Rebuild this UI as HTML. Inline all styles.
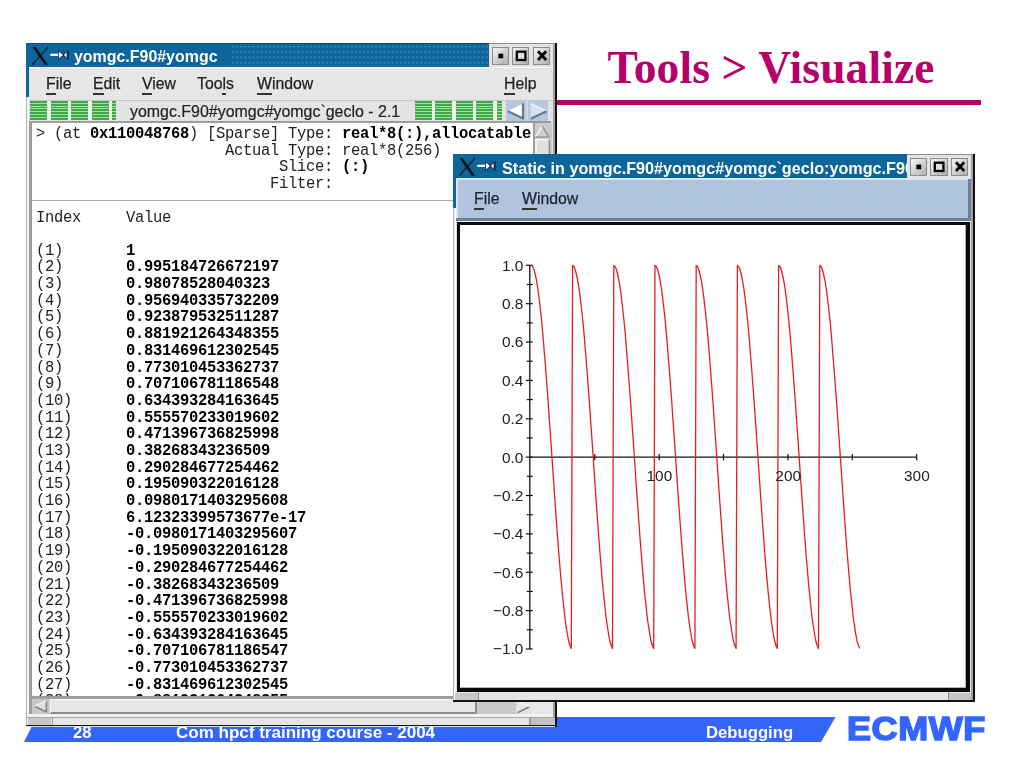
<!DOCTYPE html>
<html><head><meta charset="utf-8"><title>Tools &gt; Visualize</title>
<style>
html,body{margin:0;padding:0;}
body{width:1024px;height:768px;overflow:hidden;background:#fff;position:relative;font-family:"Liberation Sans",sans-serif;}
.abs,.m,.grn,div{position:absolute;}
.m{font-family:"Liberation Mono",monospace;font-size:15.5px;line-height:16.69px;height:16.69px;white-space:pre;color:#222;letter-spacing:-0.3px;transform:scaleY(1.07);transform-origin:0 50%;will-change:transform;}
.m.b{font-weight:bold;color:#000;}
.s{font-family:"Liberation Sans",sans-serif;white-space:pre;will-change:transform;}
.grn{top:100.5px;height:19.5px;background:repeating-linear-gradient(to bottom,#43a64c 0,#43a64c 1.8px,#98e69a 1.8px,#98e69a 2.8px);}
u{text-decoration:none;border-bottom:2px solid #333;padding-bottom:0.5px;}
.btn{box-sizing:border-box;border:1.2px solid #8c8c8c;background:linear-gradient(135deg,#f0f0f0 10%,#d2d2d2 50%,#aeaeae 100%);}
</style></head><body>

<!-- slide title -->
<div class="abs" id="title" style="left:607.4px;top:40.1px;letter-spacing:0.17px;font-family:'Liberation Serif',serif;font-weight:bold;font-size:45.4px;line-height:56px;color:#b5006b;white-space:pre;">Tools &gt; Visualize</div>
<div class="abs" style="left:550px;top:99.7px;width:431px;height:5.3px;background:#b7006c;"></div>

<!-- footer -->
<svg class="abs" style="left:0;top:0" width="1024" height="768" viewBox="0 0 1024 768">
<polygon points="36.5,717 835.5,717 821,742 24,742" fill="#3265f8"/>
</svg>
<div class="abs s" id="f28" style="left:73px;top:723px;font-weight:bold;font-size:16.6px;line-height:20px;color:#fff;">28</div>
<div class="abs s" id="fcom" style="left:176px;top:723px;font-weight:bold;font-size:17.03px;line-height:20px;color:#fff;">Com hpcf training course - 2004</div>
<div class="abs s" id="fdbg" style="left:706px;top:723px;font-weight:bold;font-size:16.7px;line-height:20px;color:#fff;">Debugging</div>
<div class="abs s" id="ecmwf" style="left:847px;top:708.5px;font-weight:bold;font-size:32.3px;line-height:40px;color:#3366ff;-webkit-text-stroke:1.5px #3366ff;letter-spacing:0.5px;transform:scaleX(1.115);transform-origin:0 0;">ECMWF</div>

<!-- ================= WINDOW 1 ================= -->
<div id="w1" style="left:26px;top:43px;width:531px;height:683.5px;background:#dedede;"></div>
<!-- title bar -->
<div style="left:26px;top:43px;width:463px;height:24px;background:#0e659a;"></div>
<div style="left:231px;top:44px;width:258px;height:22px;background-image:radial-gradient(circle at 2px 2.6px,#2d84bc 0.7px,transparent 1.5px);background-size:4.1px 5.4px;"></div>
<div style="left:26px;top:43px;width:3px;height:53.5px;background:#0e659a;"></div>
<div style="left:26px;top:96.5px;width:1.2px;height:629px;background:#b4b4b4;"></div>
<div style="left:27.2px;top:96.5px;width:2px;height:629px;background:#f6f6f6;"></div>
<div style="left:26px;top:43px;width:463px;height:1px;background:#0c5380;"></div>
<!-- X icon + pin -->
<svg class="abs" style="left:26px;top:43px" width="60" height="24" viewBox="0 0 60 24">
<path d="M6.5 4 L9.6 4 L22 21.7 L18.9 21.7 Z" fill="#0a0a14"/>
<path d="M22 4 L6.4 21.7" stroke="#0a0a14" stroke-width="1.1" fill="none"/>
<rect x="24.3" y="10.7" width="9" height="2.3" fill="#fff"/>
<path d="M32 6.8 L37.6 11 L42.6 6.8 L42.6 17.2 L37.6 13 L32 17.2 Z" fill="#0b2450"/>
<path d="M32.9 8.5 L37.1 12 L32.9 15.5 Z" fill="#fff"/>
<path d="M40.7 9.3 L37.9 12 L40.7 14.7 Z" fill="#f2f2f2"/>
</svg>
<div class="s" id="t1" style="left:73.5px;top:46.5px;font-weight:bold;font-size:15.95px;line-height:20px;color:#fff;">yomgc.F90#yomgc</div>
<!-- title buttons -->
<div style="left:489px;top:43px;width:64px;height:24px;background:#e4e4e4;"></div>
<div style="left:489px;top:43px;width:66px;height:1.2px;background:#8e8e8e;"></div>
<div class="btn" style="left:492.2px;top:47.2px;width:17px;height:17.4px;"></div>
<div class="btn" style="left:512.3px;top:47.2px;width:17.2px;height:17.4px;"></div>
<div class="btn" style="left:532.8px;top:47.2px;width:17.6px;height:17.4px;"></div>
<svg class="abs" style="left:489px;top:43px" width="66" height="24" viewBox="0 0 66 24">
<rect x="9.4" y="10.6" width="4.8" height="4.7" fill="#000"/>
<rect x="27.8" y="8.7" width="8.6" height="8.3" fill="#e0e0e0" stroke="#000" stroke-width="2.3"/>
<path d="M49 8.2 L57.2 17 M57.2 8.2 L49 17" stroke="#000" stroke-width="2.8" fill="none"/>
</svg>
<!-- right frame -->
<div style="left:552.6px;top:43.5px;width:2.9px;height:682px;background:#a2a2a2;"></div>
<div style="left:555.3px;top:43px;width:1.7px;height:683.5px;background:#111;"></div>
<!-- menu bar -->
<div style="left:29px;top:67px;width:523.6px;height:33px;background:#e6e6e6;"></div>
<div style="left:29px;top:67px;width:523.6px;height:1.3px;background:#fbfbfb;"></div>
<div class="s mn" id="m1" style="-webkit-text-stroke:0.25px #222;left:45.6px;top:75px;font-size:15.8px;line-height:18px;color:#222;"><u>F</u>ile</div>
<div class="s mn" id="m2" style="-webkit-text-stroke:0.25px #222;left:92.8px;top:75px;font-size:15.8px;line-height:18px;color:#222;"><u>E</u>dit</div>
<div class="s mn" id="m3" style="-webkit-text-stroke:0.25px #222;left:141.5px;top:75px;font-size:15.8px;line-height:18px;color:#222;"><u>V</u>iew</div>
<div class="s mn" id="m4" style="-webkit-text-stroke:0.25px #222;left:196.5px;top:75px;font-size:15.8px;line-height:18px;color:#222;">Too<u>l</u>s</div>
<div class="s mn" id="m5" style="-webkit-text-stroke:0.25px #222;left:256.5px;top:75px;font-size:15.8px;line-height:18px;color:#222;"><u>W</u>indow</div>
<div class="s mn" id="m6" style="-webkit-text-stroke:0.25px #222;left:504px;top:75px;font-size:15.8px;line-height:18px;color:#222;"><u>H</u>elp</div>
<!-- tab bar -->
<div style="left:29px;top:100px;width:523.6px;height:21.5px;background:#e4e4e4;"></div>
<div style="left:29px;top:99.5px;width:523.6px;height:1px;background:#c4c4c4;"></div>
<div style="left:30px;top:100.5px;width:86px;height:19.5px;background:#ecf5ec;"></div>
<div style="left:414.5px;top:100.5px;width:87px;height:19.5px;background:#ecf5ec;"></div>
<div class="grn" style="left:30.0px;width:17.0px"></div>
<div class="grn" style="left:50.6px;width:17.0px"></div>
<div class="grn" style="left:71.0px;width:17.0px"></div>
<div class="grn" style="left:91.5px;width:17.0px"></div>
<div class="grn" style="left:112.0px;width:4.0px"></div>
<div class="grn" style="left:414.5px;width:17.0px"></div>
<div class="grn" style="left:435.0px;width:17.0px"></div>
<div class="grn" style="left:455.5px;width:17.0px"></div>
<div class="grn" style="left:476.0px;width:17.0px"></div>
<div class="grn" style="left:497.0px;width:4.5px"></div>
<div class="s" id="tab" style="-webkit-text-stroke:0.2px #222;left:129.5px;top:101.5px;font-size:15.95px;line-height:19px;color:#222;">yomgc.F90#yomgc#yomgc`geclo - 2.1</div>
<div style="left:505.5px;top:100.5px;width:42.5px;height:20.5px;background:#b4c8e2;"></div>
<svg class="abs" style="left:505px;top:100px" width="44" height="22" viewBox="0 0 44 22">
<rect x="20.6" y="0.5" width="2.4" height="20.5" fill="#c9d8ec"/>
<path d="M3 11 L18.5 3.6 L18.5 18.4 Z" fill="#fff"/>
<path d="M3 11.2 L18 18.6" stroke="#6a788e" stroke-width="2.2" fill="none"/>
<path d="M18 3.4 V19.4" stroke="#6a788e" stroke-width="2.2" fill="none"/>
<path d="M25.6 3.6 L41.5 11 L25.6 18.4 Z" fill="#d6e2f2"/>
<path d="M25.6 3.6 L41.5 11" stroke="#eef3fa" stroke-width="1.4" fill="none"/>
<path d="M41.5 11.2 L26 18.8" stroke="#6a788e" stroke-width="2.2" fill="none"/>
</svg>
<!-- content area -->
<div style="left:29.2px;top:121.2px;width:521.8px;height:576px;background:#9c9c9c;"></div>
<div style="left:32px;top:123px;width:501px;height:573.3px;background:#fff;"></div>
<div style="left:32px;top:199.8px;width:501px;height:1.2px;background:#a8a8a8;"></div>
<!-- v scrollbar -->
<div style="left:533px;top:123px;width:18.5px;height:573.3px;background:#cbcbcb;"></div>
<div style="left:533px;top:123px;width:1.6px;height:573.3px;background:#a0a0a0;"></div>
<svg class="abs" style="left:533px;top:123px" width="19" height="32" viewBox="0 0 19 32">
<path d="M9.2 3 L16 14 L2.4 14 Z" fill="#d0d0d0"/>
<path d="M9.2 3 L2.4 14" stroke="#fafafa" stroke-width="1.4"/>
<path d="M9.2 3 L16 14 L2.4 14" stroke="#9a9a9a" stroke-width="1.5" fill="none"/>
<rect x="3" y="16.6" width="13.5" height="16" fill="#e0e0e0"/>
<path d="M3 32 V16.6 H16" stroke="#fafafa" stroke-width="1.3" fill="none"/>
<path d="M16.4 16.6 V32" stroke="#8c8c8c" stroke-width="1.5" fill="none"/>
</svg>
<div id="clip" style="left:0;top:0;width:533px;height:695.6px;overflow:hidden;">
<div class="m" style="left:36.20px;top:125.90px">&gt; (at</div>
<div class="m b" style="left:90.20px;top:125.90px">0x110048768</div>
<div class="m" style="left:189.20px;top:125.90px">) [Sparse] Type:</div>
<div class="m b" style="left:342.20px;top:125.90px">real*8(:),allocatable</div>
<div class="m" style="left:225.20px;top:142.59px">Actual Type: real*8(256)</div>
<div class="m" style="left:279.20px;top:159.28px">Slice:</div>
<div class="m b" style="left:342.20px;top:159.28px">(:)</div>
<div class="m" style="left:270.20px;top:175.97px">Filter:</div>
<div class="m" style="left:36.20px;top:209.50px">Index</div>
<div class="m" style="left:126.20px;top:209.50px">Value</div>
<div class="m" style="left:36.20px;top:242.70px">(1)</div>
<div class="m b" style="left:126.20px;top:242.70px">1</div>
<div class="m" style="left:36.20px;top:259.39px">(2)</div>
<div class="m b" style="left:126.20px;top:259.39px">0.995184726672197</div>
<div class="m" style="left:36.20px;top:276.08px">(3)</div>
<div class="m b" style="left:126.20px;top:276.08px">0.98078528040323</div>
<div class="m" style="left:36.20px;top:292.77px">(4)</div>
<div class="m b" style="left:126.20px;top:292.77px">0.956940335732209</div>
<div class="m" style="left:36.20px;top:309.46px">(5)</div>
<div class="m b" style="left:126.20px;top:309.46px">0.923879532511287</div>
<div class="m" style="left:36.20px;top:326.15px">(6)</div>
<div class="m b" style="left:126.20px;top:326.15px">0.881921264348355</div>
<div class="m" style="left:36.20px;top:342.84px">(7)</div>
<div class="m b" style="left:126.20px;top:342.84px">0.831469612302545</div>
<div class="m" style="left:36.20px;top:359.53px">(8)</div>
<div class="m b" style="left:126.20px;top:359.53px">0.773010453362737</div>
<div class="m" style="left:36.20px;top:376.22px">(9)</div>
<div class="m b" style="left:126.20px;top:376.22px">0.707106781186548</div>
<div class="m" style="left:36.20px;top:392.91px">(10)</div>
<div class="m b" style="left:126.20px;top:392.91px">0.634393284163645</div>
<div class="m" style="left:36.20px;top:409.60px">(11)</div>
<div class="m b" style="left:126.20px;top:409.60px">0.555570233019602</div>
<div class="m" style="left:36.20px;top:426.29px">(12)</div>
<div class="m b" style="left:126.20px;top:426.29px">0.471396736825998</div>
<div class="m" style="left:36.20px;top:442.98px">(13)</div>
<div class="m b" style="left:126.20px;top:442.98px">0.38268343236509</div>
<div class="m" style="left:36.20px;top:459.67px">(14)</div>
<div class="m b" style="left:126.20px;top:459.67px">0.290284677254462</div>
<div class="m" style="left:36.20px;top:476.36px">(15)</div>
<div class="m b" style="left:126.20px;top:476.36px">0.195090322016128</div>
<div class="m" style="left:36.20px;top:493.05px">(16)</div>
<div class="m b" style="left:126.20px;top:493.05px">0.0980171403295608</div>
<div class="m" style="left:36.20px;top:509.74px">(17)</div>
<div class="m b" style="left:126.20px;top:509.74px">6.12323399573677e-17</div>
<div class="m" style="left:36.20px;top:526.43px">(18)</div>
<div class="m b" style="left:126.20px;top:526.43px">-0.0980171403295607</div>
<div class="m" style="left:36.20px;top:543.12px">(19)</div>
<div class="m b" style="left:126.20px;top:543.12px">-0.195090322016128</div>
<div class="m" style="left:36.20px;top:559.81px">(20)</div>
<div class="m b" style="left:126.20px;top:559.81px">-0.290284677254462</div>
<div class="m" style="left:36.20px;top:576.50px">(21)</div>
<div class="m b" style="left:126.20px;top:576.50px">-0.38268343236509</div>
<div class="m" style="left:36.20px;top:593.19px">(22)</div>
<div class="m b" style="left:126.20px;top:593.19px">-0.471396736825998</div>
<div class="m" style="left:36.20px;top:609.88px">(23)</div>
<div class="m b" style="left:126.20px;top:609.88px">-0.555570233019602</div>
<div class="m" style="left:36.20px;top:626.57px">(24)</div>
<div class="m b" style="left:126.20px;top:626.57px">-0.634393284163645</div>
<div class="m" style="left:36.20px;top:643.26px">(25)</div>
<div class="m b" style="left:126.20px;top:643.26px">-0.707106781186547</div>
<div class="m" style="left:36.20px;top:659.95px">(26)</div>
<div class="m b" style="left:126.20px;top:659.95px">-0.773010453362737</div>
<div class="m" style="left:36.20px;top:676.64px">(27)</div>
<div class="m b" style="left:126.20px;top:676.64px">-0.831469612302545</div>
<div class="m" style="left:36.20px;top:693.33px">(28)</div>
<div class="m b" style="left:126.20px;top:693.33px">-0.881921264348355</div>
</div>
<!-- h scrollbar -->
<div style="left:29.2px;top:696.5px;width:523.4px;height:29px;background:#e6e6e6;"></div>
<div style="left:29.2px;top:696.8px;width:522px;height:2.4px;background:#a0a0a0;"></div>
<div style="left:29.2px;top:696.8px;width:2.8px;height:17.2px;background:#a0a0a0;"></div>
<div style="left:32px;top:699.2px;width:501.5px;height:14.6px;background:#c9c9c9;"></div>
<div style="left:49.6px;top:699.4px;width:427.4px;height:14.3px;background:#e6e6e6;box-sizing:border-box;border-top:1.2px solid #f8f8f8;border-left:1.2px solid #f8f8f8;border-right:2px solid #8e8e8e;border-bottom:2px solid #8e8e8e;"></div>
<div style="left:516px;top:699.4px;width:15px;height:14.3px;background:#e2e2e2;"></div>
<div style="left:531px;top:699.2px;width:21.1px;height:14.6px;background:#e8e8e8;"></div>
<svg class="abs" style="left:31px;top:698px" width="22" height="16" viewBox="0 0 22 16">
<path d="M3.2 8.2 L15.6 2.6 L15.6 14 Z" fill="#dedede"/>
<path d="M3.2 8.2 L15.6 14" stroke="#858585" stroke-width="1.7" fill="none"/>
<path d="M15.4 2.6 V14.4" stroke="#858585" stroke-width="1.7" fill="none"/>
<path d="M3.2 8.2 L15.4 2.6" stroke="#f6f6f6" stroke-width="1.2" fill="none"/>
</svg>
<svg class="abs" style="left:515px;top:698px" width="18" height="16" viewBox="0 0 18 16">
<path d="M2.6 2.6 L14.4 8.4 L2.6 14.6 Z" fill="#e8e8e8"/>
<path d="M14.4 8.6 L2.6 14.8" stroke="#858585" stroke-width="1.8" fill="none"/>
<path d="M2.6 2.6 L14.4 8.4" stroke="#f8f8f8" stroke-width="1.2" fill="none"/>
</svg>
<!-- bottom frame -->
<div style="left:27px;top:713.8px;width:526px;height:3.2px;background:#f1f1f1;"></div>
<div style="left:27px;top:716.9px;width:526px;height:0.9px;background:#a6a6a6;"></div>
<div style="left:27.6px;top:717.8px;width:23.9px;height:6.8px;background:#c6c6c6;"></div>
<div style="left:51.5px;top:716.9px;width:1.5px;height:7.8px;background:#9a9a9a;"></div>
<div style="left:53px;top:717.8px;width:476px;height:6.8px;background:#e6e6e6;"></div>
<div style="left:529px;top:716.9px;width:1.5px;height:7.8px;background:#9a9a9a;"></div>
<div style="left:530.5px;top:717.8px;width:24px;height:6.8px;background:#c2c2c2;"></div>
<div style="left:26px;top:724.6px;width:531px;height:1.9px;background:#141414;"></div>
<div style="left:554.6px;top:696px;width:2.4px;height:30.5px;background:#141414;"></div>

<!-- ================= WINDOW 2 ================= -->
<div id="w2" style="left:453px;top:154px;width:522px;height:547.5px;background:#e0e0e0;"></div>
<div style="left:453px;top:154px;width:454px;height:24px;background:#0e659a;"></div>
<div style="left:453px;top:154px;width:3px;height:53.5px;background:#0e659a;"></div>
<div style="left:453px;top:207.5px;width:1.2px;height:493px;background:#b4b4b4;"></div>
<div style="left:454.2px;top:207.5px;width:2px;height:493px;background:#f6f6f6;"></div>
<svg class="abs" style="left:453px;top:154px" width="60" height="24" viewBox="0 0 60 24">
<path d="M6.5 4 L9.6 4 L22 21.7 L18.9 21.7 Z" fill="#0a0a14"/>
<path d="M22 4 L6.4 21.7" stroke="#0a0a14" stroke-width="1.1" fill="none"/>
<rect x="24.3" y="10.7" width="9" height="2.3" fill="#fff"/>
<path d="M32 6.8 L37.6 11 L42.6 6.8 L42.6 17.2 L37.6 13 L32 17.2 Z" fill="#0b2450"/>
<path d="M32.9 8.5 L37.1 12 L32.9 15.5 Z" fill="#fff"/>
<path d="M40.7 9.3 L37.9 12 L40.7 14.7 Z" fill="#f2f2f2"/>
</svg>
<div class="s" id="t2" style="left:502px;top:157.5px;width:405px;overflow:hidden;font-weight:bold;font-size:16.2px;line-height:20px;color:#fff;">Static in yomgc.F90#yomgc#yomgc`geclo:yomgc.F90</div>
<div style="left:907px;top:154px;width:65px;height:24px;background:#e4e4e4;"></div>
<div style="left:907px;top:154px;width:67px;height:1.2px;background:#8e8e8e;"></div>
<div class="btn" style="left:910px;top:158.2px;width:17.4px;height:17.4px;"></div>
<div class="btn" style="left:930.4px;top:158.2px;width:17.4px;height:17.4px;"></div>
<div class="btn" style="left:950.8px;top:158.2px;width:17.6px;height:17.4px;"></div>
<svg class="abs" style="left:907px;top:154px" width="66" height="24" viewBox="0 0 66 24">
<rect x="9.4" y="10.6" width="4.8" height="4.7" fill="#000"/>
<rect x="27.8" y="8.7" width="8.6" height="8.3" fill="#e0e0e0" stroke="#000" stroke-width="2.3"/>
<path d="M49 8.2 L57.2 17 M57.2 8.2 L49 17" stroke="#000" stroke-width="2.8" fill="none"/>
</svg>
<div style="left:971.3px;top:154.5px;width:2px;height:546px;background:#a2a2a2;"></div>
<div style="left:973.2px;top:154px;width:1.8px;height:547.5px;background:#111;"></div>
<div style="left:453px;top:699.6px;width:522px;height:2px;background:#141414;"></div>
<!-- menu bar 2 -->
<div style="left:456px;top:178px;width:515px;height:43px;background:#b0c4de;"></div>
<div style="left:456px;top:178px;width:515px;height:2px;background:#dbe6f5;"></div>
<div style="left:456px;top:178px;width:2px;height:43px;background:#dbe6f5;"></div>
<div style="left:456px;top:217.6px;width:515px;height:3.4px;background:#6f8096;"></div>
<div style="left:967.6px;top:179px;width:3.4px;height:42px;background:#6f8096;"></div>
<div class="s" id="n1" style="-webkit-text-stroke:0.25px #1c2430;left:474px;top:189.9px;font-size:15.8px;line-height:18px;color:#1c2430;"><u>F</u>ile</div>
<div class="s" id="n2" style="-webkit-text-stroke:0.25px #1c2430;left:522px;top:189.9px;font-size:15.8px;line-height:18px;color:#1c2430;"><u>W</u>indow</div>
<!-- plot area -->
<div style="left:456px;top:221px;width:515px;height:1.2px;background:#f4f4f4;"></div>
<div style="left:457.3px;top:222.4px;width:513px;height:469.6px;background:#0a0a0a;"></div>
<div style="left:460.3px;top:225px;width:506px;height:463.4px;background:#fff;"></div>
<div style="left:964.6px;top:225px;width:1.6px;height:463.4px;background:#b0b0b0;"></div>
<div style="left:460.3px;top:686.8px;width:506px;height:1.6px;background:#b0b0b0;"></div>
<!-- bottom frame 2 -->
<div style="left:456px;top:692px;width:515.4px;height:7.8px;background:#e6e6e6;"></div>
<div style="left:455px;top:693.2px;width:22.6px;height:6.6px;background:#c8c8c8;"></div>
<div style="left:477.6px;top:692px;width:1.4px;height:7.8px;background:#909090;"></div>
<div style="left:947.5px;top:692px;width:1.4px;height:7.8px;background:#909090;"></div>
<div style="left:949px;top:693.2px;width:22.4px;height:6.6px;background:#c4c4c4;"></div>
<div style="left:453px;top:699.7px;width:522px;height:1.9px;background:#141414;"></div>
<svg class="abs" style="left:0;top:0" width="1024" height="768" viewBox="0 0 1024 768">
<g fill="none"><path d="M529.8 265.3 V649.0" stroke="#111" stroke-width="1.3"/>
<path d="M529.8 457.15 H916.6" stroke="#111" stroke-width="1.3"/>
<path d="M525.8 649.00 H532.8" stroke="#111" stroke-width="1.2"/>
<path d="M526.8 629.81 H532.8" stroke="#111" stroke-width="1.2"/>
<path d="M525.8 610.63 H532.8" stroke="#111" stroke-width="1.2"/>
<path d="M526.8 591.44 H532.8" stroke="#111" stroke-width="1.2"/>
<path d="M525.8 572.26 H532.8" stroke="#111" stroke-width="1.2"/>
<path d="M526.8 553.07 H532.8" stroke="#111" stroke-width="1.2"/>
<path d="M525.8 533.89 H532.8" stroke="#111" stroke-width="1.2"/>
<path d="M526.8 514.70 H532.8" stroke="#111" stroke-width="1.2"/>
<path d="M525.8 495.52 H532.8" stroke="#111" stroke-width="1.2"/>
<path d="M526.8 476.33 H532.8" stroke="#111" stroke-width="1.2"/>
<path d="M525.8 457.15 H532.8" stroke="#111" stroke-width="1.2"/>
<path d="M526.8 437.96 H532.8" stroke="#111" stroke-width="1.2"/>
<path d="M525.8 418.78 H532.8" stroke="#111" stroke-width="1.2"/>
<path d="M526.8 399.59 H532.8" stroke="#111" stroke-width="1.2"/>
<path d="M525.8 380.41 H532.8" stroke="#111" stroke-width="1.2"/>
<path d="M526.8 361.22 H532.8" stroke="#111" stroke-width="1.2"/>
<path d="M525.8 342.04 H532.8" stroke="#111" stroke-width="1.2"/>
<path d="M526.8 322.86 H532.8" stroke="#111" stroke-width="1.2"/>
<path d="M525.8 303.67 H532.8" stroke="#111" stroke-width="1.2"/>
<path d="M526.8 284.49 H532.8" stroke="#111" stroke-width="1.2"/>
<path d="M525.8 265.30 H532.8" stroke="#111" stroke-width="1.2"/>
<path d="M594.77 453.9 V460.3" stroke="#111" stroke-width="1.2"/>
<path d="M659.15 453.9 V460.3" stroke="#111" stroke-width="1.2"/>
<path d="M723.52 453.9 V460.3" stroke="#111" stroke-width="1.2"/>
<path d="M787.90 453.9 V460.3" stroke="#111" stroke-width="1.2"/>
<path d="M852.27 453.9 V460.3" stroke="#111" stroke-width="1.2"/>
<path d="M916.65 453.9 V460.3" stroke="#111" stroke-width="1.2"/></g>
<path d="M531.39 265.5 L532.68 266.5 L533.96 269.5 L535.25 274.5 L536.54 280.5 L537.83 288.5 L539.11 298.5 L540.40 309.5 L541.69 321.5 L542.98 335.5 L544.26 351.5 L545.55 367.5 L546.84 384.5 L548.12 401.5 L549.41 420.5 L550.70 438.5 L551.99 457.5 L553.27 476.5 L554.56 495.5 L555.85 513.5 L557.14 531.5 L558.43 548.5 L559.71 564.5 L561.00 579.5 L562.29 593.5 L563.58 605.5 L564.86 617.5 L566.15 626.5 L567.44 634.5 L568.73 641.5 L570.01 645.5 L571.30 648.5 L572.59 265.5 L573.88 266.5 L575.16 269.5 L576.45 274.5 L577.74 280.5 L579.02 288.5 L580.31 298.5 L581.60 309.5 L582.89 321.5 L584.18 335.5 L585.46 351.5 L586.75 367.5 L588.04 384.5 L589.33 401.5 L590.61 420.5 L591.90 438.5 L593.19 457.5 L594.48 476.5 L595.76 495.5 L597.05 513.5 L598.34 531.5 L599.62 548.5 L600.91 564.5 L602.20 579.5 L603.49 593.5 L604.78 605.5 L606.06 617.5 L607.35 626.5 L608.64 634.5 L609.93 641.5 L611.21 645.5 L612.50 648.5 L613.79 265.5 L615.08 266.5 L616.36 269.5 L617.65 274.5 L618.94 280.5 L620.23 288.5 L621.51 298.5 L622.80 309.5 L624.09 321.5 L625.38 335.5 L626.66 351.5 L627.95 367.5 L629.24 384.5 L630.53 401.5 L631.81 420.5 L633.10 438.5 L634.39 457.5 L635.68 476.5 L636.96 495.5 L638.25 513.5 L639.54 531.5 L640.83 548.5 L642.11 564.5 L643.40 579.5 L644.69 593.5 L645.98 605.5 L647.26 617.5 L648.55 626.5 L649.84 634.5 L651.12 641.5 L652.41 645.5 L653.70 648.5 L654.99 265.5 L656.28 266.5 L657.56 269.5 L658.85 274.5 L660.14 280.5 L661.43 288.5 L662.71 298.5 L664.00 309.5 L665.29 321.5 L666.58 335.5 L667.86 351.5 L669.15 367.5 L670.44 384.5 L671.73 401.5 L673.01 420.5 L674.30 438.5 L675.59 457.5 L676.88 476.5 L678.16 495.5 L679.45 513.5 L680.74 531.5 L682.03 548.5 L683.31 564.5 L684.60 579.5 L685.89 593.5 L687.18 605.5 L688.46 617.5 L689.75 626.5 L691.04 634.5 L692.33 641.5 L693.61 645.5 L694.90 648.5 L696.19 265.5 L697.48 266.5 L698.76 269.5 L700.05 274.5 L701.34 280.5 L702.62 288.5 L703.91 298.5 L705.20 309.5 L706.49 321.5 L707.78 335.5 L709.06 351.5 L710.35 367.5 L711.64 384.5 L712.93 401.5 L714.21 420.5 L715.50 438.5 L716.79 457.5 L718.08 476.5 L719.36 495.5 L720.65 513.5 L721.94 531.5 L723.23 548.5 L724.51 564.5 L725.80 579.5 L727.09 593.5 L728.38 605.5 L729.66 617.5 L730.95 626.5 L732.24 634.5 L733.53 641.5 L734.81 645.5 L736.10 648.5 L737.39 265.5 L738.68 266.5 L739.96 269.5 L741.25 274.5 L742.54 280.5 L743.83 288.5 L745.11 298.5 L746.40 309.5 L747.69 321.5 L748.98 335.5 L750.26 351.5 L751.55 367.5 L752.84 384.5 L754.12 401.5 L755.41 420.5 L756.70 438.5 L757.99 457.5 L759.28 476.5 L760.56 495.5 L761.85 513.5 L763.14 531.5 L764.43 548.5 L765.71 564.5 L767.00 579.5 L768.29 593.5 L769.58 605.5 L770.86 617.5 L772.15 626.5 L773.44 634.5 L774.73 641.5 L776.01 645.5 L777.30 648.5 L778.59 265.5 L779.88 266.5 L781.16 269.5 L782.45 274.5 L783.74 280.5 L785.03 288.5 L786.31 298.5 L787.60 309.5 L788.89 321.5 L790.18 335.5 L791.46 351.5 L792.75 367.5 L794.04 384.5 L795.33 401.5 L796.61 420.5 L797.90 438.5 L799.19 457.5 L800.48 476.5 L801.76 495.5 L803.05 513.5 L804.34 531.5 L805.62 548.5 L806.91 564.5 L808.20 579.5 L809.49 593.5 L810.78 605.5 L812.06 617.5 L813.35 626.5 L814.64 634.5 L815.93 641.5 L817.21 645.5 L818.50 648.5 L819.79 265.5 L821.08 266.5 L822.36 269.5 L823.65 274.5 L824.94 280.5 L826.23 288.5 L827.51 298.5 L828.80 309.5 L830.09 321.5 L831.38 335.5 L832.66 351.5 L833.95 367.5 L835.24 384.5 L836.53 401.5 L837.81 420.5 L839.10 438.5 L840.39 457.5 L841.68 476.5 L842.96 495.5 L844.25 513.5 L845.54 531.5 L846.83 548.5 L848.11 564.5 L849.40 579.5 L850.69 593.5 L851.98 605.5 L853.26 617.5 L854.55 626.5 L855.84 634.5 L857.12 641.5 L858.41 645.5 L859.70 648.5" fill="none" stroke="#e41f24" stroke-width="1.3" stroke-linejoin="round"/>
<g font-family="Liberation Sans, sans-serif" font-size="15.4px" fill="#222"><text x="523.3" y="654.4" text-anchor="end">−1.0</text>
<text x="523.3" y="616.0" text-anchor="end">−0.8</text>
<text x="523.3" y="577.7" text-anchor="end">−0.6</text>
<text x="523.3" y="539.3" text-anchor="end">−0.4</text>
<text x="523.3" y="500.9" text-anchor="end">−0.2</text>
<text x="523.3" y="462.5" text-anchor="end">0.0</text>
<text x="523.3" y="424.2" text-anchor="end">0.2</text>
<text x="523.3" y="385.8" text-anchor="end">0.4</text>
<text x="523.3" y="347.4" text-anchor="end">0.6</text>
<text x="523.3" y="309.1" text-anchor="end">0.8</text>
<text x="523.3" y="270.7" text-anchor="end">1.0</text>
<text x="659.4" y="481.2" text-anchor="middle">100</text>
<text x="788.2" y="481.2" text-anchor="middle">200</text>
<text x="916.9" y="481.2" text-anchor="middle">300</text></g>
</svg>
</body></html>
